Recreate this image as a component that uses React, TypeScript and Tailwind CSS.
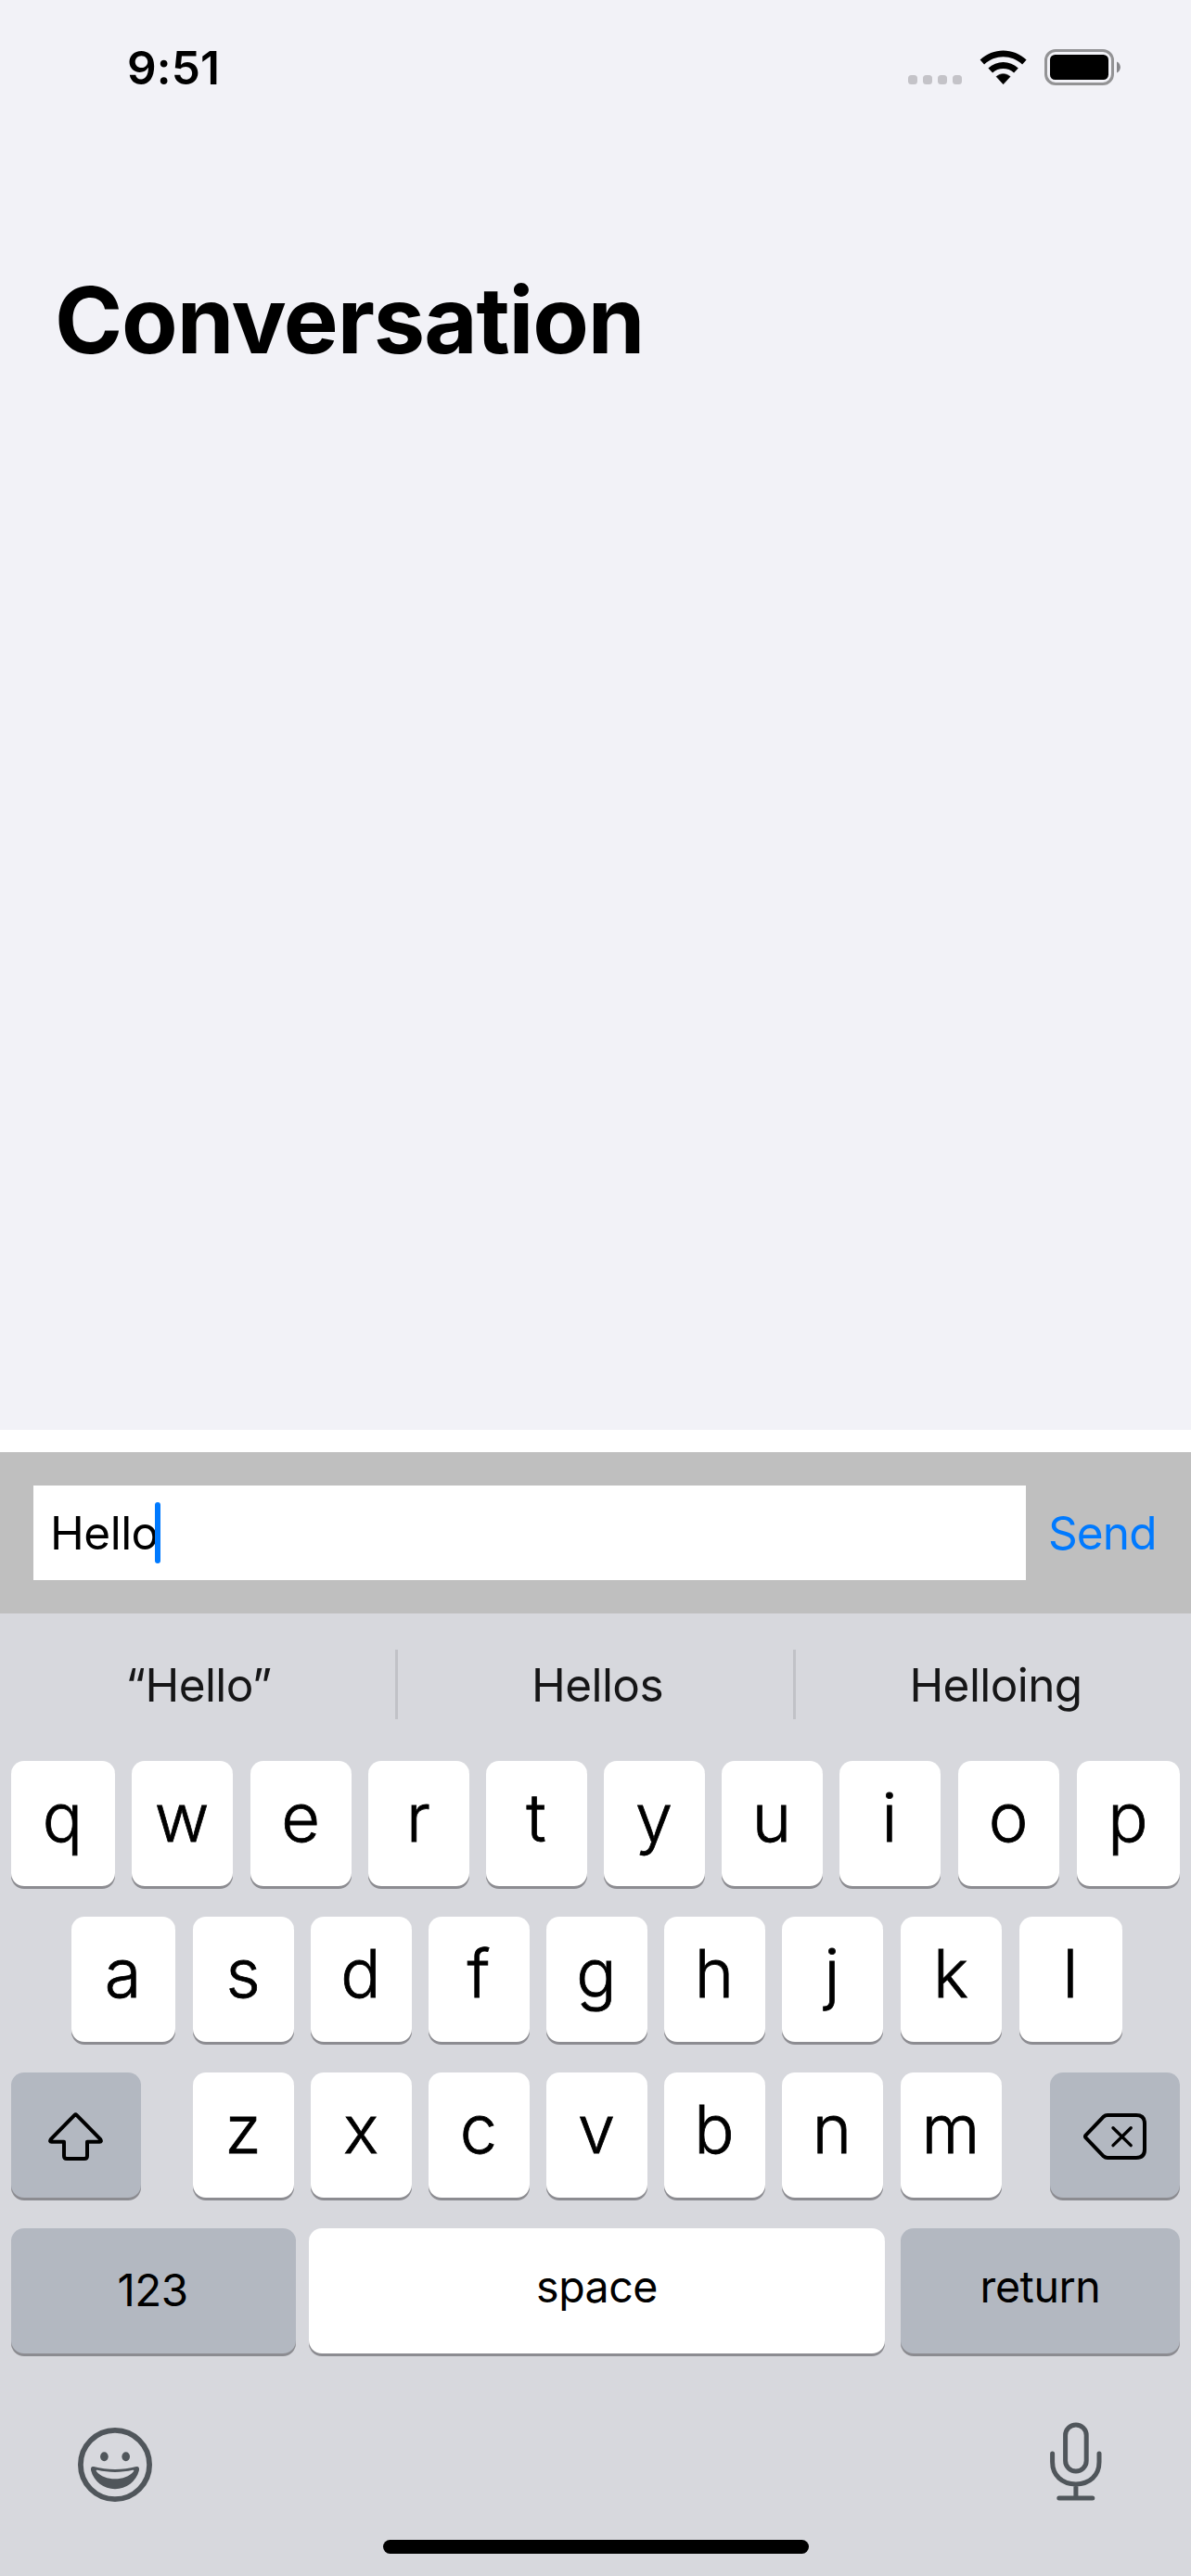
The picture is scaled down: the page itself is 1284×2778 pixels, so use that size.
import type { ReactNode } from "react";

function Wifi() {
  return (
    <svg width="52" height="38" viewBox="0 0 52 38" fill="#000">
      <path d="M0.6 10.6C14.5 -3 36.7 -3 50.6 10.6L46.1 15.4C34.6 4.4 16.6 4.4 5.1 15.4Z" />
      <path d="M9.4 19.6C18.4 10.9 32.8 10.9 41.8 19.6L37.1 24.4C30.8 18.5 20.4 18.5 14.1 24.4Z" />
      <path d="M18.1 28.6C22.4 24.7 28.8 24.7 33.1 28.6L25.6 36.8Z" strokeWidth="0.6" stroke="#000" strokeLinejoin="round" />
    </svg>
  );
}

function Battery() {
  return (
    <div className="flex items-center">
      <div className="h-[39px] w-[75px] rounded-[12px] border-[3px] border-[#939395] p-[3px]">
        <div className="h-[27px] w-[63px] rounded-[5.5px] bg-black" />
      </div>
      <svg className="ml-[3px]" width="4" height="13" viewBox="0 0 4 13" fill="#86868a">
        <path d="M0 0.5C5.2 2.5 5.2 10.5 0 12.5Z" />
      </svg>
    </div>
  );
}

function ShiftIcon() {
  return (
    <svg className="mt-[3px] mr-px" width="59" height="52" viewBox="0 0 59 52" fill="none" stroke="#000" strokeWidth="4" strokeLinejoin="round">
      <path d="M28.5 2.8Q29.5 1.8 30.5 2.8L56.3 29.2Q57.8 31.8 55.5 31.8H42V47Q42 50 39 50H20Q17 50 17 47V31.8H3.5Q1.2 31.8 2.7 29.2Z" />
    </svg>
  );
}

function DeleteIcon() {
  return (
    <svg className="mt-[3px]" width="68" height="50" viewBox="0 0 68 50" fill="none" stroke="#000" strokeWidth="4" strokeLinecap="round" strokeLinejoin="round">
      <path d="M26 2H57Q66 2 66 11V39Q66 48 57 48H26Q23.5 48 21.7 46.3L2.6 26.4Q1.4 25 2.6 23.6L21.7 3.7Q23.5 2 26 2Z" />
      <path strokeWidth="3.4" d="M32 15.7L51.2 34.6M51.2 15.7L32 34.6" />
    </svg>
  );
}

function EmojiIcon() {
  return (
    <svg width="80" height="80" viewBox="0 0 80 80" fill="#50565b">
      <circle cx="40" cy="40" r="37.1" fill="none" stroke="#50565b" strokeWidth="5.8" />
      <ellipse cx="28.4" cy="31.3" rx="4.3" ry="5" />
      <ellipse cx="51.7" cy="31.3" rx="4.3" ry="5" />
      <path
        fillRule="evenodd"
        d="M17 42C32 46 48 46 63 42C65.6 41.5 66.4 43.5 65.9 46.2C63 58 52 66.2 40 66.2S17 58 14.1 46.2C13.6 43.5 14.4 41.5 17 42ZM21 45.8C19.8 45.6 19.3 46.2 20 47.3C24.5 52.8 32 55.3 40 55.3S55.5 52.8 60 47.3C60.7 46.2 60.2 45.6 59 45.8C46.5 48.6 33.5 48.6 21 45.8Z"
      />
    </svg>
  );
}

function MicIcon() {
  return (
    <svg width="56" height="85" viewBox="0 0 56 85" fill="none" stroke="#50565b" strokeWidth="5" strokeLinecap="round">
      <rect x="16.6" y="2.9" width="22.6" height="50.2" rx="11.3" />
      <path d="M2.6 34V43C2.6 57.5 13 66.9 27.9 66.9S53 57.5 53 43V34M27.9 67V81.8M9.8 82H45.8" />
    </svg>
  );
}

function Key({ className, children }: { className: string; children: ReactNode }) {
  return (
    <div
      className={`flex h-[135px] shrink-0 items-center justify-center rounded-[14px] shadow-[0_3px_0_#8c8c91] ${className}`}
    >
      {children}
    </div>
  );
}

function Letter({ char, size = "w-[109px]" }: { char: string; size?: string }) {
  return (
    <Key className={`bg-white pr-px pb-[14px] text-[72px] leading-none font-light [-webkit-text-stroke:0.8px_#000] ${size}`}>{char}</Key>
  );
}

export default function App() {
  return (
    <div className="flex h-[2778px] w-[1284px] flex-col overflow-hidden bg-[#f2f2f7] font-['Inter',sans-serif] text-black">
      <header className="flex h-[146px] items-start justify-between pr-[76px] pl-[137px]">
        <div className="pt-[48px] text-[49.5px] leading-[50px] font-semibold tracking-[0.1px]">9:51</div>
        <div className="flex items-start pt-[53px]">
          <div className="mt-[28px] flex gap-[6px]">
            {[0, 1, 2, 3].map((dot) => (
              <div key={dot} className="size-[10px] rounded-[3.5px] bg-[#c4c3c8]" />
            ))}
          </div>
          <div className="mt-px mr-[18px] ml-[19px]">
            <Wifi />
          </div>
          <Battery />
        </div>
      </header>

      <main className="flex-1 px-[59px] pt-[149px]">
        <h1 className="text-[99px] leading-[100px] font-bold tracking-[-1.15px]">Conversation</h1>
      </main>

      <div className="h-[24px] bg-white" />

      <div className="flex h-[174px] items-center bg-[#bfbfbf] pl-[36px]">
        <div className="flex h-[102px] w-[1070px] items-center bg-white pl-[18px]">
          <span className="pt-[2px] text-[49.5px] leading-none tracking-[-0.5px]">Hello</span>
          <span className="-ml-[4px] h-[66px] w-[6px] rounded-[3px] bg-[#007aff]" />
        </div>
        <button className="ml-[24px] pt-[2px] text-[49.5px] leading-none tracking-[-0.9px] text-[#007aff]">Send</button>
      </div>

      <section className="flex h-[1038px] flex-col bg-[#d7d8dd]">
        <div className="flex h-[159px] items-start pt-[39px] text-[49.5px] leading-[77px] tracking-[-0.6px] text-[#161617]">
          <div className="w-[426px] pl-[2px] text-center">“Hello”</div>
          <div className="h-[75px] w-[3px] bg-[#c1c2c7]" />
          <div className="w-[426px] pl-[4px] text-center">Hellos</div>
          <div className="h-[75px] w-[3px] bg-[#c1c2c7]" />
          <div className="w-[426px] pl-[5px] text-center">Helloing</div>
        </div>

        <div className="flex flex-col gap-[33px] px-[12px]">
          <div className="flex gap-[18px]">
            <Letter char="q" size="w-[112px]" />
            <Letter char="w" />
            <Letter char="e" size="ml-px w-[109px]" />
            {[..."rtyui"].map((c) => (
              <Letter key={c} char={c} />
            ))}
            <Letter char="o" size="ml-px w-[109px]" />
            <Letter char="p" size="ml-px w-[111px]" />
          </div>
          <div className="flex gap-[18px] pl-[65px]">
            <Letter char="a" size="mr-px w-[112px]" />
            {[..."sdfghj"].map((c) => (
              <Letter key={c} char={c} />
            ))}
            <Letter char="k" size="ml-px w-[109px]" />
            <Letter char="l" size="ml-px w-[111px]" />
          </div>
          <div className="flex justify-between">
            <Key className="w-[140px] bg-[#b3b8c1]">
              <ShiftIcon />
            </Key>
            <div className="flex w-[868px] gap-[18px]">
              {[..."zxcvbn"].map((c) => (
                <Letter key={c} char={c} />
              ))}
              <Letter char="m" size="ml-px w-[109px]" />
            </div>
            <Key className="w-[140px] bg-[#b3b8c1]">
              <DeleteIcon />
            </Key>
          </div>
          <div className="flex">
            <Key className="mr-[14px] w-[307px] bg-[#b3b8c1] pr-[2px] pb-px text-[47.5px] leading-none tracking-[-0.6px]">123</Key>
            <Key className="mr-[17px] w-[621px] bg-white pb-[8px] text-[46.5px] leading-none tracking-[-0.5px]">space</Key>
            <Key className="w-[301px] bg-[#b3b8c1] pb-[8px] text-[46.5px] leading-none tracking-[-0.4px]">return</Key>
          </div>
        </div>

        <div className="mt-[74px] flex items-start justify-between pr-[96px] pl-[84px]">
          <div className="pt-[6px]">
            <EmojiIcon />
          </div>
          <MicIcon />
        </div>
        <div className="mt-auto mb-[24px] ml-[413px] h-[15px] w-[459px] rounded-full bg-black" />
      </section>
    </div>
  );
}
